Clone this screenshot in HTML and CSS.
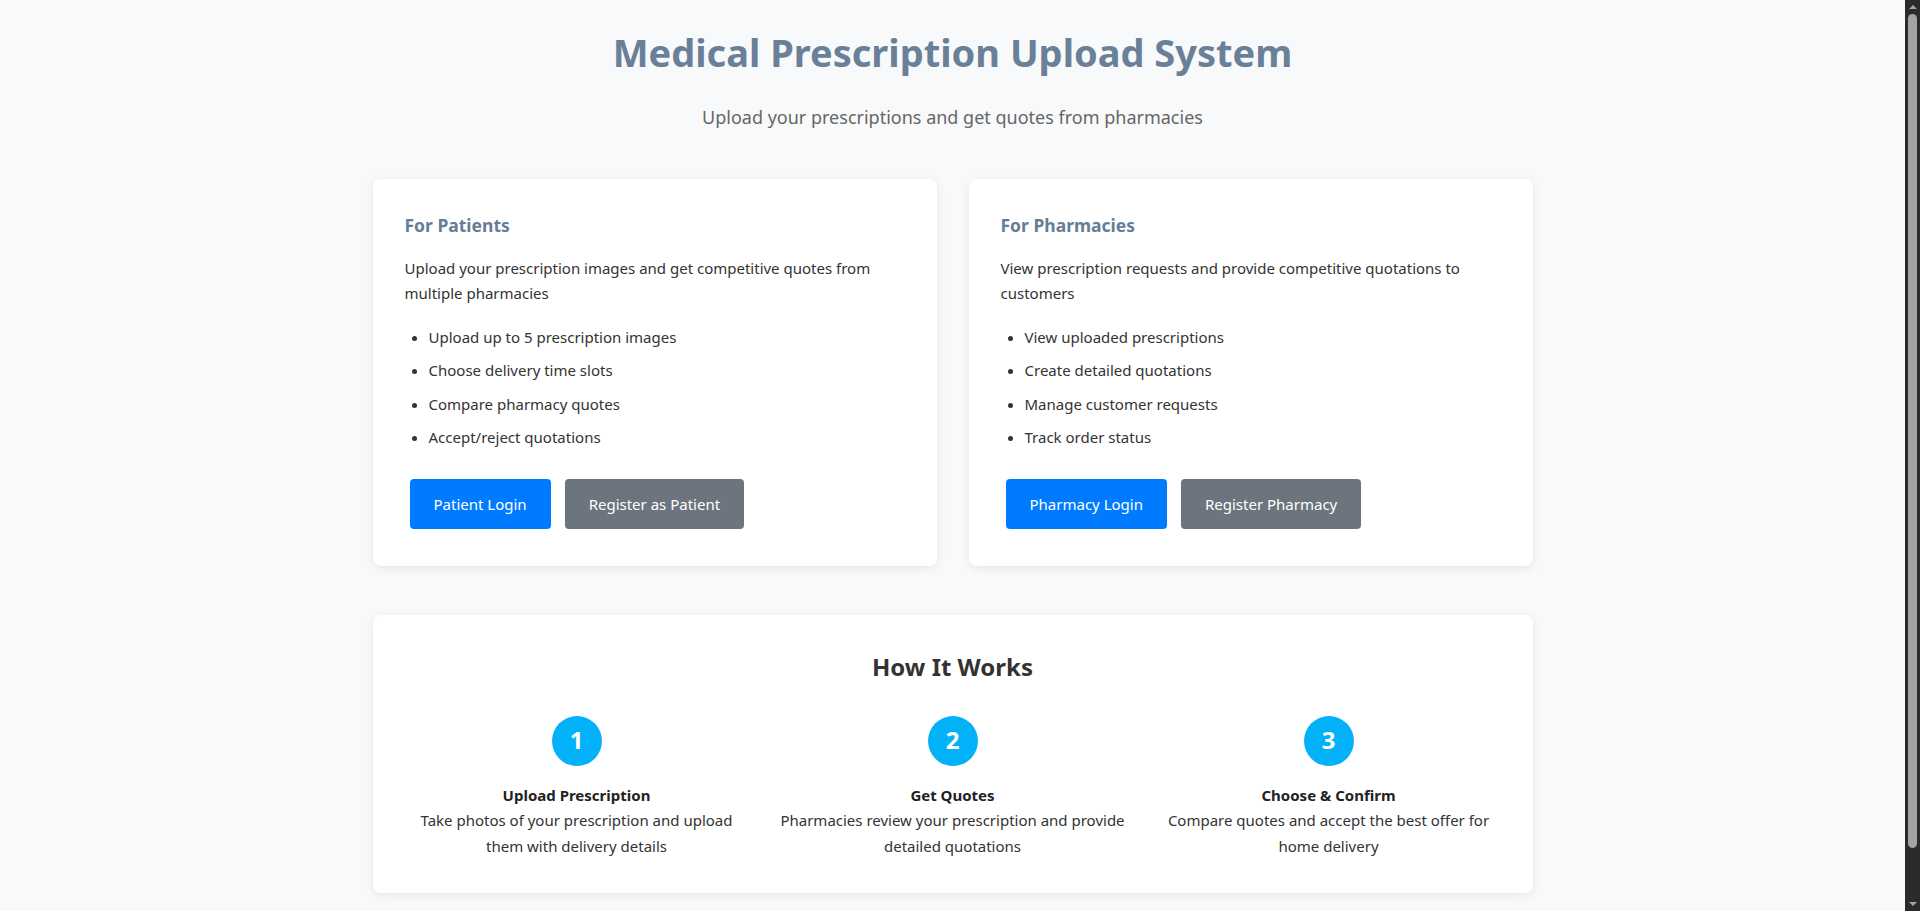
FILE: index.html
```html
<!DOCTYPE html>
<html lang="en">
<head>
<meta charset="utf-8">
<title>Medical Prescription Upload System</title>
<link rel="stylesheet" href="styles.css">
</head>
<body>
<div class="container">
  <header class="header">
    <h1 class="title">Medical Prescription Upload System</h1>
    <p class="subtitle">Upload your prescriptions and get quotes from pharmacies</p>
  </header>

  <div class="cards">
    <section class="card">
      <h3 class="card-title">For Patients</h3>
      <p class="card-text">Upload your prescription images and get competitive quotes from multiple pharmacies</p>
      <ul class="features">
        <li>Upload up to 5 prescription images</li>
        <li>Choose delivery time slots</li>
        <li>Compare pharmacy quotes</li>
        <li>Accept/reject quotations</li>
      </ul>
      <div class="actions">
        <a class="btn btn-primary" href="#">Patient Login</a>
        <a class="btn btn-secondary" href="#">Register as Patient</a>
      </div>
    </section>
    <section class="card">
      <h3 class="card-title">For Pharmacies</h3>
      <p class="card-text">View prescription requests and provide competitive quotations to customers</p>
      <ul class="features">
        <li>View uploaded prescriptions</li>
        <li>Create detailed quotations</li>
        <li>Manage customer requests</li>
        <li>Track order status</li>
      </ul>
      <div class="actions">
        <a class="btn btn-primary" href="#">Pharmacy Login</a>
        <a class="btn btn-secondary" href="#">Register Pharmacy</a>
      </div>
    </section>
  </div>

  <section class="card how">
    <h2 class="how-title">How It Works</h2>
    <div class="steps">
      <div class="step">
        <div class="step-num">1</div>
        <h4 class="step-title">Upload Prescription</h4>
        <p class="step-text">Take photos of your prescription and upload them with delivery details</p>
      </div>
      <div class="step">
        <div class="step-num">2</div>
        <h4 class="step-title">Get Quotes</h4>
        <p class="step-text">Pharmacies review your prescription and provide detailed quotations</p>
      </div>
      <div class="step">
        <div class="step-num">3</div>
        <h4 class="step-title">Choose &amp; Confirm</h4>
        <p class="step-text">Compare quotes and accept the best offer for home delivery</p>
      </div>
    </div>
  </section>
</div>

<div class="scrollbar" aria-hidden="true">
  <span class="scroll-arrow scroll-up"></span>
  <span class="scroll-thumb"></span>
  <span class="scroll-arrow scroll-down"></span>
</div>
</body>
</html>
```

FILE: styles.css
```css
* {
  box-sizing: border-box;
}

html, body {
  margin: 0;
  padding: 0;
}

body {
  background: #f8f9fa;
  color: #333;
  font-family: "Noto Sans", "Open Sans", Arial, sans-serif;
  font-size: 15px;
  line-height: 1.7;
  padding-right: 15px;
}

.container {
  max-width: 1200px;
  margin: 0 auto;
  padding: 20px 20px 40px;
}

.header {
  text-align: center;
  margin-bottom: 46px;
}

.title {
  margin: 8px 0 0;
  font-size: 38px;
  line-height: 1.3;
  font-weight: 700;
  color: #6a7f98;
}

.subtitle {
  margin: 25px 0 0;
  font-size: 18px;
  color: #666;
}

.cards {
  display: grid;
  grid-template-columns: 1fr 1fr;
  gap: 32px;
  margin-bottom: 49px;
}

.card {
  background: #fff;
  border-radius: 8px;
  padding: 32px 32px 37px;
  box-shadow: 0 2px 10px rgba(0, 0, 0, 0.08);
}

.card-title {
  margin: 0 0 15px;
  font-size: 17.5px;
  font-weight: 700;
  color: #667d96;
}

.card-text {
  margin: 0 0 18px;
}

.features {
  margin: 0 0 28px;
  padding-left: 24px;
}

.features li {
  margin: 0 0 8px;
}

.actions {
  display: flex;
  gap: 14px;
  padding-left: 5px;
}

.btn {
  display: inline-block;
  padding: 12px 24px;
  border-radius: 4px;
  font-size: 15px;
  line-height: 26px;
  color: #fff;
  text-decoration: none;
}

.btn-primary {
  background: #007bff;
}

.btn-secondary {
  background: #6c757d;
}

.how {
  text-align: center;
  padding-bottom: 34px;
}

.how-title {
  margin: 0 0 28px;
  font-size: 24px;
  font-weight: 700;
  color: #333;
}

.steps {
  display: grid;
  grid-template-columns: repeat(3, 1fr);
  gap: 32px;
}

.step {
  display: flex;
  flex-direction: column;
  align-items: center;
}

.step-num {
  width: 50px;
  height: 50px;
  border-radius: 50%;
  background: #03b1f9;
  color: #fff;
  font-size: 24px;
  font-weight: 700;
  display: flex;
  align-items: center;
  justify-content: center;
  margin-bottom: 17px;
}

.step-title {
  margin: 0;
  font-size: 15px;
  font-weight: 700;
  color: #222;
}

.step-text {
  margin: 0 -2px;
  font-size: 15px;
}

/* decorative browser scrollbar */
.scrollbar {
  position: fixed;
  top: 0;
  right: 0;
  bottom: 0;
  width: 15px;
  background: #2b2b2b;
  display: flex;
  flex-direction: column;
  align-items: center;
  padding: 3px 0;
}

.scroll-arrow {
  width: 0;
  height: 0;
  border-left: 4px solid transparent;
  border-right: 4px solid transparent;
}

.scroll-up {
  border-bottom: 4px solid #a3a3a3;
  margin: 2px 0 5px;
}

.scroll-down {
  border-top: 4px solid #a3a3a3;
  margin: 6px 0 2px;
}

.scroll-thumb {
  width: 9px;
  flex: 1;
  margin-bottom: 48px;
  background: #a3a3a3;
  border-radius: 5px;
}
```
